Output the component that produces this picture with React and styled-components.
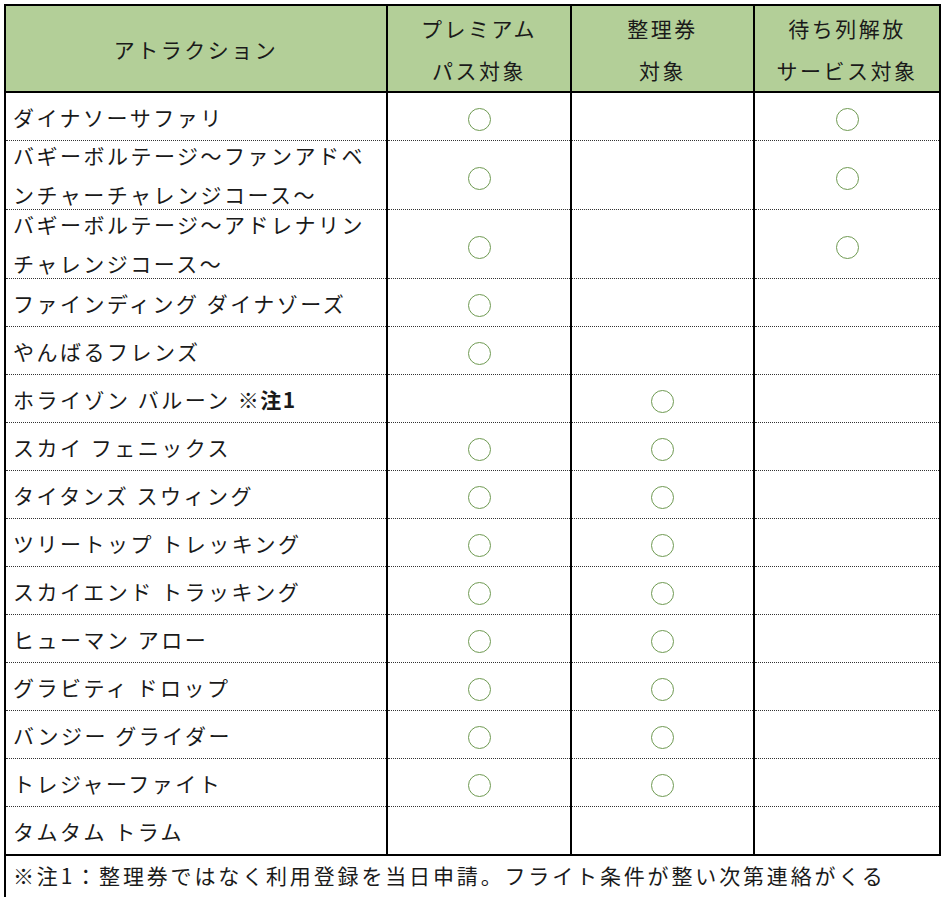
import styled, { createGlobalStyle } from 'styled-components';

const GlobalStyle = createGlobalStyle`
  html, body {
    margin: 0;
    padding: 0;
    background: #fff;
  }
  body {
    font-family: "Noto Sans CJK JP", "Noto Sans", sans-serif;
    color: #1a1a1a;
  }
`;

const Page = styled.div`
  padding: 4px 0 0 4px;
  width: 944px;
  height: 906px;
  box-sizing: border-box;
  overflow: hidden;
`;

const Table = styled.table`
  border-collapse: collapse;
  table-layout: fixed;
  width: 935px;
  font-size: 21px;
  letter-spacing: 2.5px;
`;

const HeadCell = styled.th`
  background: #b3cf98;
  border: 2px solid #000;
  height: 85px;
  padding: 0;
  font-weight: 400;
  line-height: 42px;
  text-align: center;
  vertical-align: middle;
`;

const Cell = styled.td`
  border-left: 2px solid #000;
  border-right: 2px solid #000;
  border-top: 1px dotted #333;
  border-bottom: ${({ $last }) => ($last ? '2px solid #000' : '1px dotted #333')};
  height: ${({ $tall }) => ($tall ? '68px' : '47px')};
  padding: 0;
  vertical-align: middle;
  text-align: ${({ $center }) => ($center ? 'center' : 'left')};
`;

const Name = styled.div`
  padding-left: 7px;
  line-height: ${({ $tall }) => ($tall ? '39px' : '30px')};
  margin: ${({ $tall }) => ($tall ? '-5px 0' : '0')};
  white-space: nowrap;
`;

const Note = styled.span`
  font-weight: 700;
  letter-spacing: 1.5px;
`;

const Mark = styled.span`
  display: inline-block;
  width: 21px;
  height: 21px;
  border: 1.5px solid #6f9a52;
  border-radius: 50%;
  vertical-align: middle;
`;

const FootCell = styled.td`
  border-left: 2px solid #000;
  border-top: 2px solid #000;
  border-right: none;
  border-bottom: none;
  height: 37px;
  padding: 4px 0 0 7px;
  vertical-align: top;
  line-height: 30px;
  letter-spacing: 2.85px;
  white-space: nowrap;
`;

const ROWS = [
  { name: ['ダイナソーサファリ'], p: true, s: false, q: true },
  { name: ['バギーボルテージ〜ファンアドベ', 'ンチャーチャレンジコース〜'], p: true, s: false, q: true },
  { name: ['バギーボルテージ〜アドレナリン', 'チャレンジコース〜'], p: true, s: false, q: true },
  { name: ['ファインディング ダイナゾーズ'], p: true, s: false, q: false },
  { name: ['やんばるフレンズ'], p: true, s: false, q: false },
  { name: ['ホライゾン バルーン '], note: '※注1', p: false, s: true, q: false },
  { name: ['スカイ フェニックス'], p: true, s: true, q: false },
  { name: ['タイタンズ スウィング'], p: true, s: true, q: false },
  { name: ['ツリートップ トレッキング'], p: true, s: true, q: false },
  { name: ['スカイエンド トラッキング'], p: true, s: true, q: false },
  { name: ['ヒューマン アロー'], p: true, s: true, q: false },
  { name: ['グラビティ ドロップ'], p: true, s: true, q: false },
  { name: ['バンジー グライダー'], p: true, s: true, q: false },
  { name: ['トレジャーファイト'], p: true, s: true, q: false },
  { name: ['タムタム トラム'], p: false, s: false, q: false },
];

export default function App() {
  return (
    <Page>
      <GlobalStyle />
      <Table>
        <colgroup>
          <col style={{ width: 382 }} />
          <col style={{ width: 184 }} />
          <col style={{ width: 183 }} />
          <col style={{ width: 186 }} />
        </colgroup>
        <thead>
          <tr>
            <HeadCell>アトラクション</HeadCell>
            <HeadCell>プレミアム<br />パス対象</HeadCell>
            <HeadCell>整理券<br />対象</HeadCell>
            <HeadCell>待ち列解放<br />サービス対象</HeadCell>
          </tr>
        </thead>
        <tbody>
          {ROWS.map((r, i) => {
            const tall = r.name.length > 1;
            const last = i === ROWS.length - 1;
            return (
              <tr key={i}>
                <Cell $tall={tall} $last={last}>
                  <Name $tall={tall}>
                    {r.name.map((line, j) => (
                      <div key={j}>
                        {line}
                        {r.note && <Note>{r.note}</Note>}
                      </div>
                    ))}
                  </Name>
                </Cell>
                <Cell $center $tall={tall} $last={last}>{r.p && <Mark />}</Cell>
                <Cell $center $tall={tall} $last={last}>{r.s && <Mark />}</Cell>
                <Cell $center $tall={tall} $last={last}>{r.q && <Mark />}</Cell>
              </tr>
            );
          })}
          <tr>
            <FootCell colSpan={4}>
              ※注1：整理券ではなく利用登録を当日申請。フライト条件が整い次第連絡がくる
            </FootCell>
          </tr>
        </tbody>
      </Table>
    </Page>
  );
}
